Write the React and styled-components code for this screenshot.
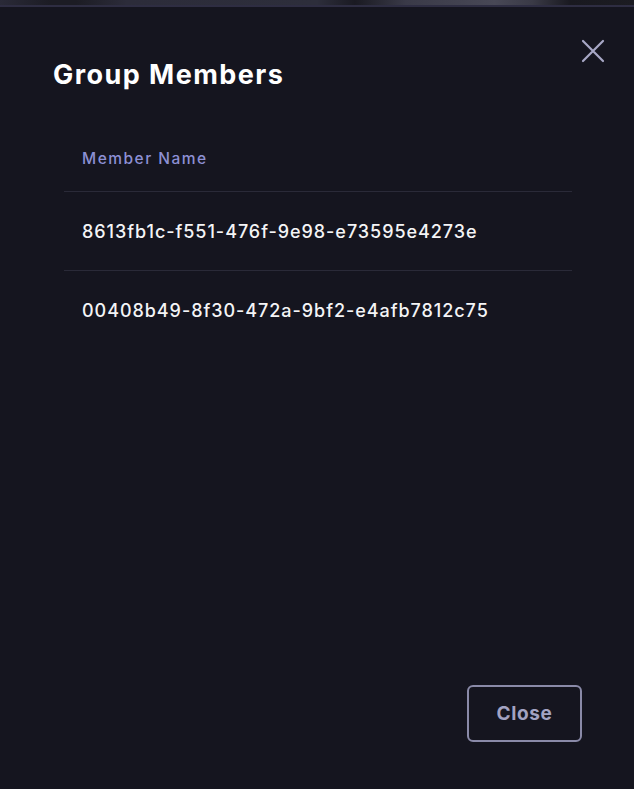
import styled, { createGlobalStyle } from "styled-components"

const members = [
  "8613fb1c-f551-476f-9e98-e73595e4273e",
  "00408b49-8f30-472a-9bf2-e4afb7812c75",
]

export default function App() {
  return (
    <>
      <GlobalStyle />
      <Page>
        <TopStrip />
        <Modal>
          <Header>
            <Title>Group Members</Title>
            <CloseIcon aria-label="close">
              <svg width="24" height="24" viewBox="0 0 24 24" fill="none">
                <path d="M2 2L22 22M22 2L2 22" stroke="currentColor" strokeWidth="2.2" strokeLinecap="round" />
              </svg>
            </CloseIcon>
          </Header>
          <Table>
            <thead>
              <tr>
                <Th>Member Name</Th>
              </tr>
            </thead>
            <tbody>
              {members.map((id, i) => (
                <tr key={id}>
                  <Td last={i === members.length - 1}>{id}</Td>
                </tr>
              ))}
            </tbody>
          </Table>
          <Footer>
            <OutlineButton>Close</OutlineButton>
          </Footer>
        </Modal>
      </Page>
    </>
  )
}

const GlobalStyle = createGlobalStyle`
  html, body {
    margin: 0;
    padding: 0;
    background: #15151f;
  }
  body {
    font-family: Inter, "Open Sans", sans-serif;
    color: #f2f2f5;
  }
`

const Page = styled.div`
  width: 634px;
  height: 789px;
  display: flex;
  flex-direction: column;
  background: #15151f;
  overflow: hidden;
`

const TopStrip = styled.div`
  height: 5px;
  flex-shrink: 0;
  border-bottom: 2px solid #2e2d42;
  background: linear-gradient(
    90deg,
    #2a2a38 0%,
    #1c1c24 8%,
    #1c1c24 12%,
    #2c2c3a 20%,
    #2d2e3b 50%,
    #1a1a22 56%,
    #3a3a48 64%,
    #484856 78%,
    #3a3a46 84%,
    #191920 90%,
    #1c1c22 100%
  );
`

const Modal = styled.div`
  flex: 1;
  display: flex;
  flex-direction: column;
  padding: 34px 30px 47px 53px;
`

const Header = styled.div`
  display: flex;
  justify-content: space-between;
  align-items: flex-start;
`

const Title = styled.h2`
  margin: 18px 0 0;
  font-size: 27px;
  font-weight: 700;
  letter-spacing: 1.45px;
  color: #ffffff;
  line-height: 32px;
`

const CloseIcon = styled.button`
  width: 24px;
  height: 24px;
  padding: 0;
  margin: -2px -1px 0 0;
  border: none;
  background: transparent;
  color: #a8a8c6;
  display: flex;
  align-items: center;
  justify-content: center;
  cursor: pointer;
`

const Table = styled.table`
  margin: 45px 32px 0 11px;
  border-collapse: collapse;
  width: calc(100% - 43px);
`

const Th = styled.th`
  text-align: left;
  padding: 13px 18px 23px;
  font-size: 15.5px;
  font-weight: 500;
  letter-spacing: 1.5px;
  color: #8d90d4;
  border-bottom: 1.5px solid #2a2a38;
`

const Td = styled.td`
  padding: 28px 18px 26px;
  font-size: 18px;
  font-weight: 500;
  letter-spacing: 0.95px;
  color: #f4f4f6;
  line-height: 24px;
  border-bottom: ${({ last }) => (last ? "none" : "1.5px solid #2a2a38")};
`

const Footer = styled.div`
  margin-top: auto;
  display: flex;
  justify-content: flex-end;
  padding-right: 22px;
`

const OutlineButton = styled.button`
  width: 115px;
  height: 57px;
  border: 2px solid #8a8aa8;
  border-radius: 6px;
  background: transparent;
  color: #a3a3c2;
  font-family: Inter, "Open Sans", sans-serif;
  font-size: 19px;
  font-weight: 700;
  letter-spacing: 0.6px;
  cursor: pointer;
`
